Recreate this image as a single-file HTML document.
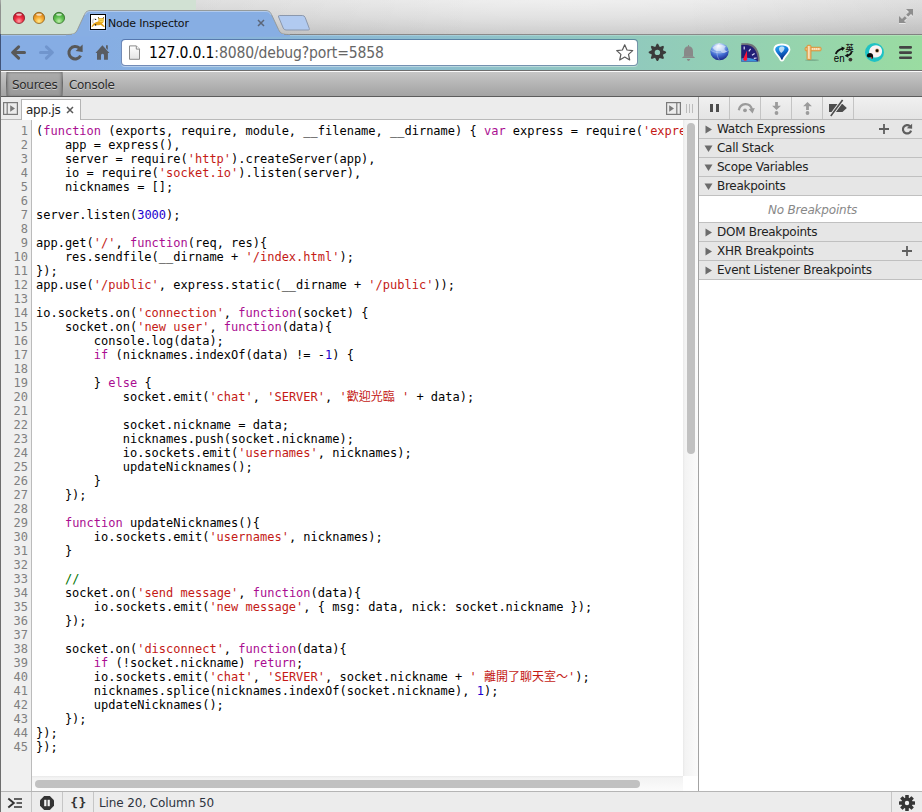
<!DOCTYPE html>
<html>
<head>
<meta charset="utf-8">
<title>Node Inspector</title>
<style>
html,body{margin:0;padding:0;}
body{width:922px;height:812px;overflow:hidden;position:relative;background:#fff;font-family:"DejaVu Sans","Liberation Sans","Noto Sans CJK TC",sans-serif;font-size:12px;color:#222;}
.abs{position:absolute;}
/* ---------- browser chrome ---------- */
#titlebar{left:0;top:0;width:922px;height:35px;background:linear-gradient(to right,rgba(0,0,0,.035) 200px,rgba(0,0,0,0) 480px,rgba(0,0,0,0) 680px,rgba(0,0,0,.04) 922px),radial-gradient(ellipse 430px 46px at 570px 0,rgba(255,255,255,.38),rgba(255,255,255,0)),linear-gradient(to bottom,#e6e6e6 0%,#d9d9d9 50%,#c6c6c6 100%);}
#titlegreen{left:0;top:0;width:196px;height:35px;background:#d1e1d3;}
#toolbar{left:0;top:35px;width:922px;height:35px;background:linear-gradient(to right,#86ade4 0%,#86ade4 10%,#8cbdd0 45%,#91cbbb 71%,#9adca1 100%);}
#toolbarline{left:0;top:70px;width:922px;height:1px;background:#6e6e6e;border-bottom:1px solid #fafafa;}
#winleft{left:0;top:0;width:1px;height:812px;background:linear-gradient(to bottom,#a9aca9 0,#8f928f 6px,#8f928f 34px,#3f5379 34px,#3f5379 70px,#6e6e6e 70px,#6e6e6e 100%);z-index:50;}
#urlbox{left:121px;top:39px;width:517px;height:27px;box-sizing:border-box;background:#fff;background-clip:padding-box;border:1px solid rgba(20,45,110,.42);border-radius:4px;box-shadow:0 1px 0 rgba(255,255,255,.4);}
#urltext{left:149px;top:42.6px;font-size:14px;line-height:19px;letter-spacing:-0.16px;transform:scaleY(1.1);transform-origin:0 0;color:#000;white-space:nowrap;}
#urltext span{color:#666;}
#tabtitle{left:108px;top:17px;font-size:11px;line-height:14px;letter-spacing:-0.2px;color:#111;white-space:nowrap;}
/* ---------- devtools toolbar ---------- */
#dtbar{left:1px;top:72px;width:921px;height:24px;background:linear-gradient(to bottom,#c6c6c6 0%,#b4b4b4 50%,#a3a3a3 100%);}
#dtbarline{left:0;top:96px;width:922px;height:1px;background:#5c5c5c;}
#dtsel{left:6px;top:72px;width:57px;height:24px;box-sizing:border-box;background:linear-gradient(to bottom,#acacac,#999999);border-left:1px solid;border-right:1px solid;border-image:linear-gradient(to bottom,rgba(0,0,0,.08),rgba(0,0,0,.36) 45%,rgba(0,0,0,.3) 60%,rgba(0,0,0,.08)) 1;box-shadow:inset 2px 0 3px -1px rgba(0,0,0,.22),inset -2px 0 3px -1px rgba(0,0,0,.22),inset 0 1px 2px rgba(0,0,0,.12);}
.dttab{top:77px;font-size:12px;line-height:16px;letter-spacing:-0.3px;color:#2a2a2a;text-shadow:0 1px 0 rgba(255,255,255,.45);white-space:nowrap;}
/* ---------- sources tab bar ---------- */
#srcbar{left:1px;top:97px;width:697px;height:22px;background:#ececec;border-bottom:1px solid #b9b9b9;box-sizing:content-box;}
#filetab{left:21px;top:99px;width:60px;height:21px;box-sizing:border-box;background:#fff;border:1px solid #b4b4b4;border-bottom:none;}
#filetabtxt{left:26px;top:102px;font-size:12px;line-height:16px;letter-spacing:-0.25px;color:#222;white-space:nowrap;}
/* ---------- editor ---------- */
#gutter{left:1px;top:120px;width:30px;height:671px;background:#f0f0f0;border-right:1px solid #bbb;}
#lines{left:1px;top:124px;width:27px;text-align:right;font:12px/14px "DejaVu Sans Mono","Liberation Mono",monospace;color:#808080;white-space:pre;}
#code{left:36px;top:124px;width:647px;height:640px;overflow:hidden;font:12px/14px "DejaVu Sans Mono","Liberation Mono","Noto Sans CJK TC",monospace;color:#000;white-space:pre;}
#code .l{height:14px;}
#code .k{color:#aa0d91;}
#code .s{color:#c41a16;}
#code .n{color:#1c00cf;}
#code .c{color:#007400;}
#code .z{font-family:"Noto Sans CJK TC","Liberation Mono",monospace;font-size:12px;line-height:0;}
#vtrack{left:683px;top:120px;width:15px;height:656px;background:linear-gradient(to right,#e9e9e9 0,#f3f3f3 2px,#fbfbfb 100%);}
#vthumb{left:687px;top:123px;width:8px;height:331px;border-radius:4px;background:#c1c1c1;}
#htrack{left:32px;top:776px;width:651px;height:15px;background:linear-gradient(to bottom,#e9e9e9 0,#f3f3f3 2px,#fbfbfb 100%);}
#hthumb{left:35px;top:780px;width:605px;height:8px;border-radius:4px;background:#c1c1c1;}
/* ---------- right panel ---------- */
#split{left:698px;top:97px;width:1px;height:694px;background:#a3a3a3;}
#dbgbar{left:699px;top:97px;width:223px;height:22px;background:linear-gradient(to bottom,#f0f0f0,#e4e4e4);border-bottom:1px solid #b9b9b9;}
.dbgsep{top:97px;width:1px;height:22px;background:#c4c4c4;}
.sec{left:699px;width:223px;height:19px;box-sizing:border-box;background:#e6e6e6;border-bottom:1px solid #c0c0c0;}
.sec span{position:absolute;left:18px;top:2px;font-size:12px;line-height:15px;letter-spacing:-0.27px;color:#222;white-space:nowrap;}
.sec svg.tr{position:absolute;left:5.6px;top:4.6px;}
.sec svg.td{position:absolute;left:4.6px;top:5.6px;}
#nobp{left:699px;top:196px;width:223px;height:27px;padding:2px 0 0 4px;background:#fff;border-bottom:1px solid #c0c0c0;box-sizing:border-box;text-align:center;font-style:italic;font-size:12px;line-height:24px;letter-spacing:-0.2px;color:#888;}
/* ---------- status bar ---------- */
#status{left:1px;top:791px;width:921px;height:21px;box-sizing:border-box;background:#ececec;border-top:1px solid #b5b5b5;}
.stsep{top:792px;width:1px;height:20px;background:#c6c6c6;}
#sttext{left:99px;top:796px;font-size:12px;line-height:15px;letter-spacing:-0.1px;color:#2e3440;white-space:nowrap;}
</style>
</head>
<body>
<!-- browser chrome -->
<div id="titlebar" class="abs"></div>
<div id="titlegreen" class="abs"></div>
<div id="toolbar" class="abs"></div>
<div id="toolbarline" class="abs"></div>
<div id="winleft" class="abs"></div>

<div id="urlbox" class="abs"></div>
<!-- CHROME-SVG-START -->
<svg class="abs" style="left:0;top:0" width="922" height="72" viewBox="0 0 922 72">
<defs>
<radialGradient id="gr" cx="50%" cy="78%" r="78%"><stop offset="0" stop-color="#ffa4a8"/><stop offset="0.45" stop-color="#f02e42"/><stop offset="1" stop-color="#b41024"/></radialGradient>
<radialGradient id="gy" cx="50%" cy="78%" r="78%"><stop offset="0" stop-color="#ffec8c"/><stop offset="0.45" stop-color="#f7ab34"/><stop offset="1" stop-color="#c87610"/></radialGradient>
<radialGradient id="gg" cx="50%" cy="78%" r="78%"><stop offset="0" stop-color="#c0eeaa"/><stop offset="0.45" stop-color="#64c456"/><stop offset="1" stop-color="#37952f"/></radialGradient>
<radialGradient id="globe" cx="45%" cy="18%" r="85%"><stop offset="0" stop-color="#f0f5ff"/><stop offset="0.35" stop-color="#8fb4ee"/><stop offset="0.65" stop-color="#3f68cf"/><stop offset="1" stop-color="#161f7c"/></radialGradient>
<linearGradient id="funnel" x1="0" y1="0" x2="0.3" y2="1"><stop offset="0" stop-color="#2fb0f6"/><stop offset="0.5" stop-color="#1276d8"/><stop offset="1" stop-color="#08308a"/></linearGradient>
<linearGradient id="pagegrad" x1="0" y1="0" x2="0" y2="1"><stop offset="0" stop-color="#ffffff"/><stop offset="1" stop-color="#e4e4e4"/></linearGradient>
</defs>
<!-- line between title bar and toolbar -->
<rect x="0" y="34" width="922" height="1" fill="#000" opacity="0.32"/>
<rect x="0" y="35" width="922" height="1" fill="#fff" opacity="0.22"/>
<!-- new tab button -->
<path d="M279.5 15.5 L302.4 15.5 Q304.4 15.5 305.2 17.5 L309.3 28.5 Q309.8 30 308.3 30 L286 30 Q284 30 283.2 28 L278.6 17 Q278 15.5 279.5 15.5 Z" fill="#b1caf0" stroke="#8b98ad" stroke-width="1"/>
<!-- active tab -->
<path d="M66 35 C73 35 75.5 34 77.5 29.5 L84.5 14.5 C86 11.5 87.5 10.5 91 10.5 L265 10.5 C268.5 10.5 270 11.5 271.5 14.5 L278.5 29.5 C280.5 34 283 35 290 35 L290 36.5 L66 36.5 Z" fill="#87aee3"/>
<path d="M66 34.5 C73 34.5 75.5 34 77.5 29.5 L84.5 14.5 C86 11.5 87.5 10.5 91 10.5 L265 10.5 C268.5 10.5 270 11.5 271.5 14.5 L278.5 29.5 C280.5 34 283 34.5 290 34.5" fill="none" stroke="#959b9b" stroke-width="1"/>
<rect x="72" y="34" width="212" height="2.5" fill="#87aee3"/>
<path d="M85 14.8 C86.4 12 88 11.5 91 11.5 L265 11.5 C268 11.5 269.6 12 271 14.8" fill="none" stroke="#fff" stroke-opacity="0.35" stroke-width="1"/>
<!-- traffic lights -->
<circle cx="19" cy="17.9" r="5.6" fill="url(#gr)" stroke="#7e1020" stroke-opacity=".8" stroke-width="0.9"/>
<circle cx="39" cy="17.9" r="5.6" fill="url(#gy)" stroke="#84560e" stroke-opacity=".8" stroke-width="0.9"/>
<circle cx="59" cy="17.9" r="5.6" fill="url(#gg)" stroke="#28641e" stroke-opacity=".8" stroke-width="0.9"/>
<ellipse cx="19" cy="14.6" rx="2.9" ry="1.2" fill="#fff" opacity=".7"/>
<ellipse cx="39" cy="14.6" rx="2.9" ry="1.2" fill="#fff" opacity=".7"/>
<ellipse cx="59" cy="14.6" rx="2.9" ry="1.2" fill="#fff" opacity=".7"/>
<!-- favicon (tomcat) -->
<rect x="89.5" y="13.5" width="17" height="17" fill="none" stroke="#9cc0f4" stroke-opacity=".55" stroke-width="1"/>
<rect x="90.5" y="14.5" width="15" height="15" fill="#fff" stroke="#000" stroke-width="1"/>
<path d="M93.7 23.6 C92 22.2 92.2 19.6 94.8 18.8" fill="none" stroke="#d4d4d4" stroke-width="1.5"/>
<path d="M91.4 26.6 C92.4 24.6 93.6 23 95.4 22.4 C97 21.8 98 21.6 98.6 21.2 L98.2 17 L99.5 18.3 L102.5 18.3 L103.8 17 L103.6 21.6 C103.4 22.6 102.6 23.2 102 23.4 L104.9 26.6 L103.6 27 L100.6 24.8 C99 25.4 96.6 25.6 94.6 24.9 L92.4 27 Z" fill="#e4a21a"/>
<path d="M98.9 18.9 L103.2 18.9 L103.1 21.3 C102.6 22.6 99.6 22.6 99.1 21.3 Z" fill="#fbd650"/>
<path d="M98.3 17.1 L98.9 18.6 M103.7 17.1 L103.1 18.6" stroke="#6b5a2a" stroke-width="0.9"/>
<path d="M100.2 20 L100.2 21 M101.9 20 L101.9 21" stroke="#c79a2a" stroke-width="0.7"/>
<circle cx="95.6" cy="19.4" r="0.7" fill="#222"/>
<circle cx="95.5" cy="24.9" r="0.8" fill="#222"/>
<!-- tab close -->
<path d="M258 20 L264 26 M264 20 L258 26" stroke="#5b6577" stroke-width="1.5" fill="none"/>
<!-- fullscreen icon -->
<g fill="#fff" opacity=".55" transform="translate(0 1)"><path d="M906 9 L913 9 L913 16 L911 14 L908.2 16.8 L906.2 14.8 L909 12 Z"/><path d="M899 16 L899 23 L906 23 L904 21 L906.8 18.2 L904.8 16.2 L902 19 Z"/></g>
<g fill="#8e8e8e">
<path d="M906 9 L913 9 L913 16 L911 14 L908.2 16.8 L906.2 14.8 L909 12 Z"/>
<path d="M899 16 L899 23 L906 23 L904 21 L906.8 18.2 L904.8 16.2 L902 19 Z"/>
</g>
<!-- back -->
<g fill="none" stroke-linecap="round" stroke-linejoin="round">
<path d="M24.5 52.5 L13.2 52.5 M18.6 46.8 L12.6 52.5 L18.6 58.2" stroke="#585858" stroke-width="3"/>
<path d="M40.5 52.5 L51.8 52.5 M46.4 46.8 L52.4 52.5 L46.4 58.2" stroke="#7095cd" stroke-width="3"/>
<!-- reload -->
<path d="M79.4 48.2 A6.2 6.2 0 1 0 80.6 55.6" stroke="#585858" stroke-width="3" stroke-linecap="butt"/>
</g>
<path d="M75.6 51 L82.6 44.6 L82.6 52 Z" fill="#585858"/>
<!-- home -->
<g fill="#595c62">
<path d="M102.4 45.3 L109.4 52.9 L95.5 52.9 Z"/>
<path d="M97 52.6 L107.9 52.6 L107.9 59.7 L104 59.7 L104 55.2 Q104 53.7 102.5 53.7 Q101 53.7 101 55.2 L101 59.7 L97 59.7 Z"/>
<path d="M106 45.2 L107.8 45.2 L107.8 49.9 L106 48 Z"/>
</g>
<!-- page icon -->
<path d="M129.5 45.9 L136.3 45.9 L139.5 49.1 L139.5 59.3 L129.5 59.3 Z" fill="url(#pagegrad)" stroke="#8a8a8a" stroke-width="1"/>
<path d="M136.3 45.9 L136.3 49.1 L139.5 49.1" fill="#fdfdfd" stroke="#8a8a8a" stroke-width="1"/>
<!-- star -->
<path d="M624.7 44.8 L627 50 L632.7 50.6 L628.5 54.4 L629.7 60 L624.7 57.1 L619.7 60 L620.9 54.4 L616.7 50.6 L622.4 50 Z" fill="#fff" stroke="#5a5a5a" stroke-width="1.2" stroke-linejoin="round"/>
<!-- gear -->
<path d="M655.25 46.91 L656.79 43.72 L658.01 43.72 L659.76 46.99 L663.10 45.83 L663.97 46.70 L662.89 50.25 L666.08 51.79 L666.08 53.01 L662.81 54.76 L663.97 58.10 L663.10 58.97 L659.55 57.89 L658.01 61.08 L656.79 61.08 L655.04 57.81 L651.70 58.97 L650.83 58.10 L651.91 54.55 L648.72 53.01 L648.72 51.79 L651.99 50.04 L650.83 46.70 L651.70 45.83 Z M654.70 52.40 a2.7 2.7 0 1 0 5.4 0 a2.7 2.7 0 1 0 -5.4 0 Z" fill="#3a3a3a" fill-rule="evenodd"/>
<!-- bell -->
<path d="M684 56.6 L684 51.4 C684 48 686 46.3 688.5 46.3 C691 46.3 693 48 693 51.4 L693 56.6 Z" fill="#898989"/>
<path d="M681.8 58 L683.8 56.3 L693.2 56.3 L695.2 58 Z" fill="#898989"/>
<rect x="688" y="45" width="1" height="2" fill="#898989"/>
<path d="M686.9 59.1 L690.1 59.1 C690.1 60.3 689.3 60.9 688.5 60.9 C687.7 60.9 686.9 60.3 686.9 59.1 Z" fill="#898989"/>
<!-- globe -->
<ellipse cx="719.5" cy="51.6" rx="9.2" ry="8.7" fill="url(#globe)"/>
<path d="M712.5 47.6 C715.5 44.2 722 43.6 726 46.6 C723.6 48.2 724 50.4 727 51.2 C725 53.4 721.6 53 720.4 51 C717.6 52 714.2 50.8 712.5 47.6 Z" fill="#fff" opacity=".5"/>
<path d="M719.5 43 C716 47 716 56 719.5 60.2 M711 50.5 C716 53.5 723 53.5 728.4 50.5" stroke="#fff" stroke-opacity=".35" stroke-width="0.9" fill="none"/>
<!-- speedometer -->
<path d="M741.3 43.2 L747.5 43.2 C754.6 43.6 759.8 49.6 759.8 61.6 L741.3 61.6 Z" fill="#6f6f78"/>
<path d="M741.3 45 L747 45 C752.8 45.4 757.8 50.6 758 61.6 L741.3 61.6 Z" fill="#231f78"/>
<path d="M741.3 58.6 C747 57 753 58 758 61.6 L741.3 61.6 Z" fill="#3b92dc"/>
<path d="M743 59.4 L746.9 50.6 L747.2 60 C746 61 744 60.8 743 59.4 Z" fill="#ff1236"/>
<path d="M744.2 46.4 L744.2 49.6 M748.8 51.4 L750.6 48.8 M752 55.2 L754.6 53.4 M753.8 58.4 L756.6 58" stroke="#dcdcf6" stroke-width="1.2"/>
<!-- funnel -->
<path d="M775.2 49.6 C775.2 46.6 778.4 45.4 781.8 45.4 C785.2 45.4 788.6 46.6 788.6 49.6 C788.6 52.4 783.4 56.4 782.6 59.2 Q781.9 60.2 781.2 59.2 C780.4 56.4 775.2 52.4 775.2 49.6 Z" fill="url(#funnel)" stroke="#fff" stroke-width="3.6" stroke-linejoin="round"/>
<path d="M775.2 49.6 C775.2 46.6 778.4 45.4 781.8 45.4 C785.2 45.4 788.6 46.6 788.6 49.6 C788.6 52.4 783.4 56.4 782.6 59.2 Q781.9 60.2 781.2 59.2 C780.4 56.4 775.2 52.4 775.2 49.6 Z" fill="url(#funnel)"/>
<path d="M779 48.4 C779.6 46.2 783.6 46 784.6 48 C784.4 50 782.6 52 781.4 53 C780 52 779 50.4 779 48.4 Z" fill="#fff" opacity=".7"/>
<!-- ruler -->
<ellipse cx="812" cy="60.2" rx="7" ry="0.9" fill="#4a6a55" opacity=".35"/>
<rect x="805.2" y="47.3" width="15.8" height="3.5" rx="0.8" fill="#f6cf98" stroke="#dd9036" stroke-width="1"/>
<rect x="807.1" y="45.3" width="3.8" height="14.3" rx="0.8" fill="#f6cf98" stroke="#dd9036" stroke-width="1"/>
<path d="M808 47 L809.2 47 M808 49 L809.2 49 M808 51 L809.2 51 M808 53 L809.2 53 M808 55 L809.2 55 M808 57 L809.2 57 M812.5 48.3 L812.5 49.6 M814.5 48.3 L814.5 49.6 M816.5 48.3 L816.5 49.6 M818.5 48.3 L818.5 49.6" stroke="#fff6e6" stroke-width="0.8"/>
<!-- translate -->
<text x="833.8" y="61.7" font-family="'Liberation Sans',sans-serif" font-size="10.5" textLength="10.8" lengthAdjust="spacingAndGlyphs" fill="#000">en</text>
<text x="845.6" y="50.7" font-family="'Noto Sans CJK TC','Liberation Sans',sans-serif" font-size="8.2" font-weight="bold" fill="#222">英</text>
<path d="M835.8 54 C836.6 51 839.6 49.4 842.6 48.6" stroke="#111" stroke-width="1.8" fill="none"/>
<path d="M841.4 46.4 L845 48 L842.2 51 Z" fill="#111"/>
<path d="M851.6 51.4 C851.4 54 849 55.2 847 55.6" stroke="#111" stroke-width="1.8" fill="none"/>
<path d="M848 53.4 L844.6 55.8 L848.4 57.8 Z" fill="#111"/>
<circle cx="850.4" cy="59.6" r="1.9" fill="#3a3430"/>
<!-- parrot -->
<circle cx="874.5" cy="52.4" r="9.5" fill="#1fc2c4"/>
<path d="M869.6 55.6 C867.6 50 871 45.2 876 45.2 C880.6 45.2 883 49.2 881.8 53.2 C880.8 56.6 877 58.2 873.6 57.4 C873 56.4 871.6 55.6 869.6 55.6 Z" fill="#faf2f3"/>
<path d="M866.9 55.2 C867.5 53.1 870.2 52.3 871.9 53.6 C873.4 54.8 873.6 57.4 872.3 59 C871.7 57.6 870.4 57 869 57.6 C867.5 57.4 866.6 56.4 866.9 55.2 Z" fill="#0c0c0c"/>
<path d="M871.2 56.8 L872.2 57.2 L871.9 59 L871.1 58.4 Z" fill="#e8242a"/>
<circle cx="877.1" cy="50.7" r="2.1" fill="#c9a27a"/>
<circle cx="877.1" cy="50.7" r="1.4" fill="#1a1008"/>
<!-- hamburger -->
<g fill="#444"><rect x="899" y="46" width="13" height="2.7" rx="1.1"/><rect x="899" y="51.2" width="13" height="2.7" rx="1.1"/><rect x="899" y="56.4" width="13" height="2.7" rx="1.1"/></g>
</svg>
<!-- CHROME-SVG-END -->

<div id="tabtitle" class="abs">Node Inspector</div>
<div id="urltext" class="abs">127.0.0.1<span>:8080/debug?port=5858</span></div>

<!-- devtools toolbar -->
<div id="dtbar" class="abs"></div>
<div id="dtsel" class="abs"></div>
<div class="abs dttab" style="left:12px">Sources</div>
<div class="abs dttab" style="left:69px">Console</div>
<div id="dtbarline" class="abs"></div>

<!-- sources tab bar -->
<div id="srcbar" class="abs"></div>
<div id="filetab" class="abs"></div>
<div id="filetabtxt" class="abs">app.js</div>

<!-- editor -->
<div id="gutter" class="abs"></div>
<div id="lines" class="abs">1
2
3
4
5
6
7
8
9
10
11
12
13
14
15
16
17
18
19
20
21
22
23
24
25
26
27
28
29
30
31
32
33
34
35
36
37
38
39
40
41
42
43
44
45</div>
<div id="code" class="abs"><div class="l">(<span class="k">function</span> (exports, require, module, __filename, __dirname) { <span class="k">var</span> express = require(<span class="s">'express'</span>),</div><div class="l">    app = express(),</div><div class="l">    server = require(<span class="s">'http'</span>).createServer(app),</div><div class="l">    io = require(<span class="s">'socket.io'</span>).listen(server),</div><div class="l">    nicknames = [];</div><div class="l"></div><div class="l">server.listen(<span class="n">3000</span>);</div><div class="l"></div><div class="l">app.get(<span class="s">'/'</span>, <span class="k">function</span>(req, res){</div><div class="l">    res.sendfile(__dirname + <span class="s">'/index.html'</span>);</div><div class="l">});</div><div class="l">app.use(<span class="s">'/public'</span>, express.static(__dirname + <span class="s">'/public'</span>));</div><div class="l"></div><div class="l">io.sockets.on(<span class="s">'connection'</span>, <span class="k">function</span>(socket) {</div><div class="l">    socket.on(<span class="s">'new user'</span>, <span class="k">function</span>(data){</div><div class="l">        console.log(data);</div><div class="l">        <span class="k">if</span> (nicknames.indexOf(data) != -<span class="n">1</span>) {</div><div class="l"></div><div class="l">        } <span class="k">else</span> {</div><div class="l">            socket.emit(<span class="s">'chat'</span>, <span class="s">'SERVER'</span>, <span class="s">'<span class="z">歡迎光臨</span> '</span> + data);</div><div class="l"></div><div class="l">            socket.nickname = data;</div><div class="l">            nicknames.push(socket.nickname);</div><div class="l">            io.sockets.emit(<span class="s">'usernames'</span>, nicknames);</div><div class="l">            updateNicknames();</div><div class="l">        }</div><div class="l">    });</div><div class="l"></div><div class="l">    <span class="k">function</span> updateNicknames(){</div><div class="l">        io.sockets.emit(<span class="s">'usernames'</span>, nicknames);</div><div class="l">    }</div><div class="l"></div><div class="l">    <span class="c">//</span></div><div class="l">    socket.on(<span class="s">'send message'</span>, <span class="k">function</span>(data){</div><div class="l">        io.sockets.emit(<span class="s">'new message'</span>, { msg: data, nick: socket.nickname });</div><div class="l">    });</div><div class="l"></div><div class="l">    socket.on(<span class="s">'disconnect'</span>, <span class="k">function</span>(data){</div><div class="l">        <span class="k">if</span> (!socket.nickname) <span class="k">return</span>;</div><div class="l">        io.sockets.emit(<span class="s">'chat'</span>, <span class="s">'SERVER'</span>, socket.nickname + <span class="s">' <span class="z">離開了聊天室～</span>'</span>);</div><div class="l">        nicknames.splice(nicknames.indexOf(socket.nickname), <span class="n">1</span>);</div><div class="l">        updateNicknames();</div><div class="l">    });</div><div class="l">});</div><div class="l">});</div></div>
<div id="vtrack" class="abs"></div>
<div id="vthumb" class="abs"></div>
<div id="htrack" class="abs"></div>
<div id="hthumb" class="abs"></div>

<!-- right panel -->
<div id="split" class="abs"></div>
<div id="dbgbar" class="abs"></div>
<div class="abs dbgsep" style="left:729px"></div>
<div class="abs dbgsep" style="left:760px"></div>
<div class="abs dbgsep" style="left:791px"></div>
<div class="abs dbgsep" style="left:822px"></div>
<div class="abs dbgsep" style="left:853px"></div>
<div class="abs sec" style="top:120px"><svg class="tr" width="8" height="9" viewBox="0 0 8 9"><path d="M0.5 0.5 L7 4.5 L0.5 8.5 Z" fill="#6b6b6b"/></svg><span>Watch Expressions</span></div>
<div class="abs sec" style="top:139px"><svg class="td" width="9" height="8" viewBox="0 0 9 8"><path d="M0.5 0.5 L8.5 0.5 L4.5 7 Z" fill="#6b6b6b"/></svg><span>Call Stack</span></div>
<div class="abs sec" style="top:158px"><svg class="td" width="9" height="8" viewBox="0 0 9 8"><path d="M0.5 0.5 L8.5 0.5 L4.5 7 Z" fill="#6b6b6b"/></svg><span>Scope Variables</span></div>
<div class="abs sec" style="top:177px"><svg class="td" width="9" height="8" viewBox="0 0 9 8"><path d="M0.5 0.5 L8.5 0.5 L4.5 7 Z" fill="#6b6b6b"/></svg><span>Breakpoints</span></div>
<div class="abs sec" style="top:223px"><svg class="tr" width="8" height="9" viewBox="0 0 8 9"><path d="M0.5 0.5 L7 4.5 L0.5 8.5 Z" fill="#6b6b6b"/></svg><span>DOM Breakpoints</span></div>
<div class="abs sec" style="top:242px"><svg class="tr" width="8" height="9" viewBox="0 0 8 9"><path d="M0.5 0.5 L7 4.5 L0.5 8.5 Z" fill="#6b6b6b"/></svg><span>XHR Breakpoints</span></div>
<div class="abs sec" style="top:261px"><svg class="tr" width="8" height="9" viewBox="0 0 8 9"><path d="M0.5 0.5 L7 4.5 L0.5 8.5 Z" fill="#6b6b6b"/></svg><span>Event Listener Breakpoints</span></div>
<div id="nobp" class="abs">No Breakpoints</div>
<!-- SECTION-ICONS -->

<!-- status bar -->
<div id="status" class="abs"></div>
<div class="abs stsep" style="left:31px"></div>
<div class="abs stsep" style="left:62px"></div>
<div class="abs stsep" style="left:93px"></div>
<div class="abs stsep" style="left:891px"></div>
<div id="sttext" class="abs">Line 20, Column 50</div>
<!-- DT-SVG-START -->
<svg class="abs" style="left:0;top:96px;z-index:20" width="922" height="716" viewBox="0 96 922 716">
<!-- navigator toggle -->
<g fill="none" stroke="#7a7a7a" stroke-width="1.2">
<rect x="3.6" y="102.6" width="13.8" height="11.8"/>
<path d="M7.2 102.6 L7.2 114.4"/>
<rect x="666.6" y="102.6" width="13.8" height="11.8"/>
<path d="M676.8 102.6 L676.8 114.4"/>
</g>
<path d="M10.2 105.2 L15 108.5 L10.2 111.8 Z" fill="#7a7a7a"/>
<path d="M669.2 105.2 L674 108.5 L669.2 111.8 Z" fill="#7a7a7a"/>
<!-- file tab close -->
<path d="M67 107 L73 113 M73 107 L67 113" stroke="#5a5a5a" stroke-width="1.5" fill="none"/>
<!-- grip -->
<path d="M686.5 104 L686.5 113 M689.5 104 L689.5 113 M692.5 104 L692.5 113" stroke="#bcbcbc" stroke-width="1"/>
<!-- pause -->
<rect x="710" y="104" width="3" height="8" fill="#4d4d4d"/><rect x="716" y="104" width="3" height="8" fill="#4d4d4d"/>
<!-- step over -->
<path d="M738.8 110.2 C740.2 102.4 750 102 752 109.4" fill="none" stroke="#9b9b9b" stroke-width="2.2"/>
<path d="M748.6 109 L754.8 108 L752.6 113.4 Z" fill="#9b9b9b"/>
<circle cx="745" cy="110.3" r="1.9" fill="#9b9b9b"/>
<!-- step into -->
<path d="M775.1 102 L777.9 102 L777.9 105.8 L780.9 105.8 L776.5 110 L772.1 105.8 L775.1 105.8 Z" fill="#9b9b9b"/>
<circle cx="776.5" cy="113" r="1.9" fill="#9b9b9b"/>
<!-- step out -->
<path d="M807.5 102 L811.9 106.3 L808.9 106.3 L808.9 110 L806.1 110 L806.1 106.3 L803.1 106.3 Z" fill="#9b9b9b"/>
<circle cx="807.5" cy="113" r="1.9" fill="#9b9b9b"/>
<!-- deactivate breakpoints -->
<path d="M829 104 L842.5 104 L846.8 108 L842.5 112 L829 112 Z" fill="#4d4d4d"/>
<path d="M842.6 100 L830.8 116" stroke="#ececec" stroke-width="3.6"/>
<path d="M842.6 100 L830.8 116" stroke="#4d4d4d" stroke-width="1.6"/>
<!-- section icons -->
<path d="M879 129 L889 129 M884 124 L884 134" stroke="#5e5e5e" stroke-width="1.8"/>
<path d="M902 251 L912 251 M907 246 L907 256" stroke="#5e5e5e" stroke-width="1.8"/>
<path d="M910 126.2 A4.2 4.2 0 1 0 911.1 130.6" fill="none" stroke="#5e5e5e" stroke-width="2.2"/>
<path d="M906.8 128.2 L912.1 123.8 L912.1 128.8 Z" fill="#5e5e5e"/>
<!-- status: console -->
<path d="M8.3 798.5 L13.8 803 L8.3 807.5" fill="none" stroke="#333" stroke-width="1.9"/>
<path d="M14 799 L22 799 M16.5 803 L22 803 M14 807 L22 807" stroke="#333" stroke-width="1.7"/>
<!-- status: pause on exceptions -->
<path d="M44.2 796 L49.8 796 L54 800.2 L54 805.8 L49.8 810 L44.2 810 L40 805.8 L40 800.2 Z" fill="#333"/>
<rect x="44.2" y="799.8" width="2.2" height="6.4" fill="#f3f3f3"/><rect x="47.6" y="799.8" width="2.2" height="6.4" fill="#f3f3f3"/>
<!-- status: pretty print -->
<text x="70.3" y="807" font-family="'DejaVu Sans Mono','Liberation Mono',monospace" font-size="13" font-weight="bold" fill="#333" letter-spacing="0.4">{}</text>
<!-- status: gear -->
<g transform="translate(907 803)" fill="#363636">
<circle r="5.6"/>
<rect x="-1.8" y="-8" width="3.6" height="16" rx="0.5"/><rect x="-1.8" y="-8" width="3.6" height="16" rx="0.5" transform="rotate(45)"/><rect x="-1.8" y="-8" width="3.6" height="16" rx="0.5" transform="rotate(90)"/><rect x="-1.8" y="-8" width="3.6" height="16" rx="0.5" transform="rotate(135)"/>
</g>
<circle cx="907" cy="803" r="2.2" fill="#f2f2f2"/>
</svg>
<!-- DT-SVG-END -->
</body>
</html>
